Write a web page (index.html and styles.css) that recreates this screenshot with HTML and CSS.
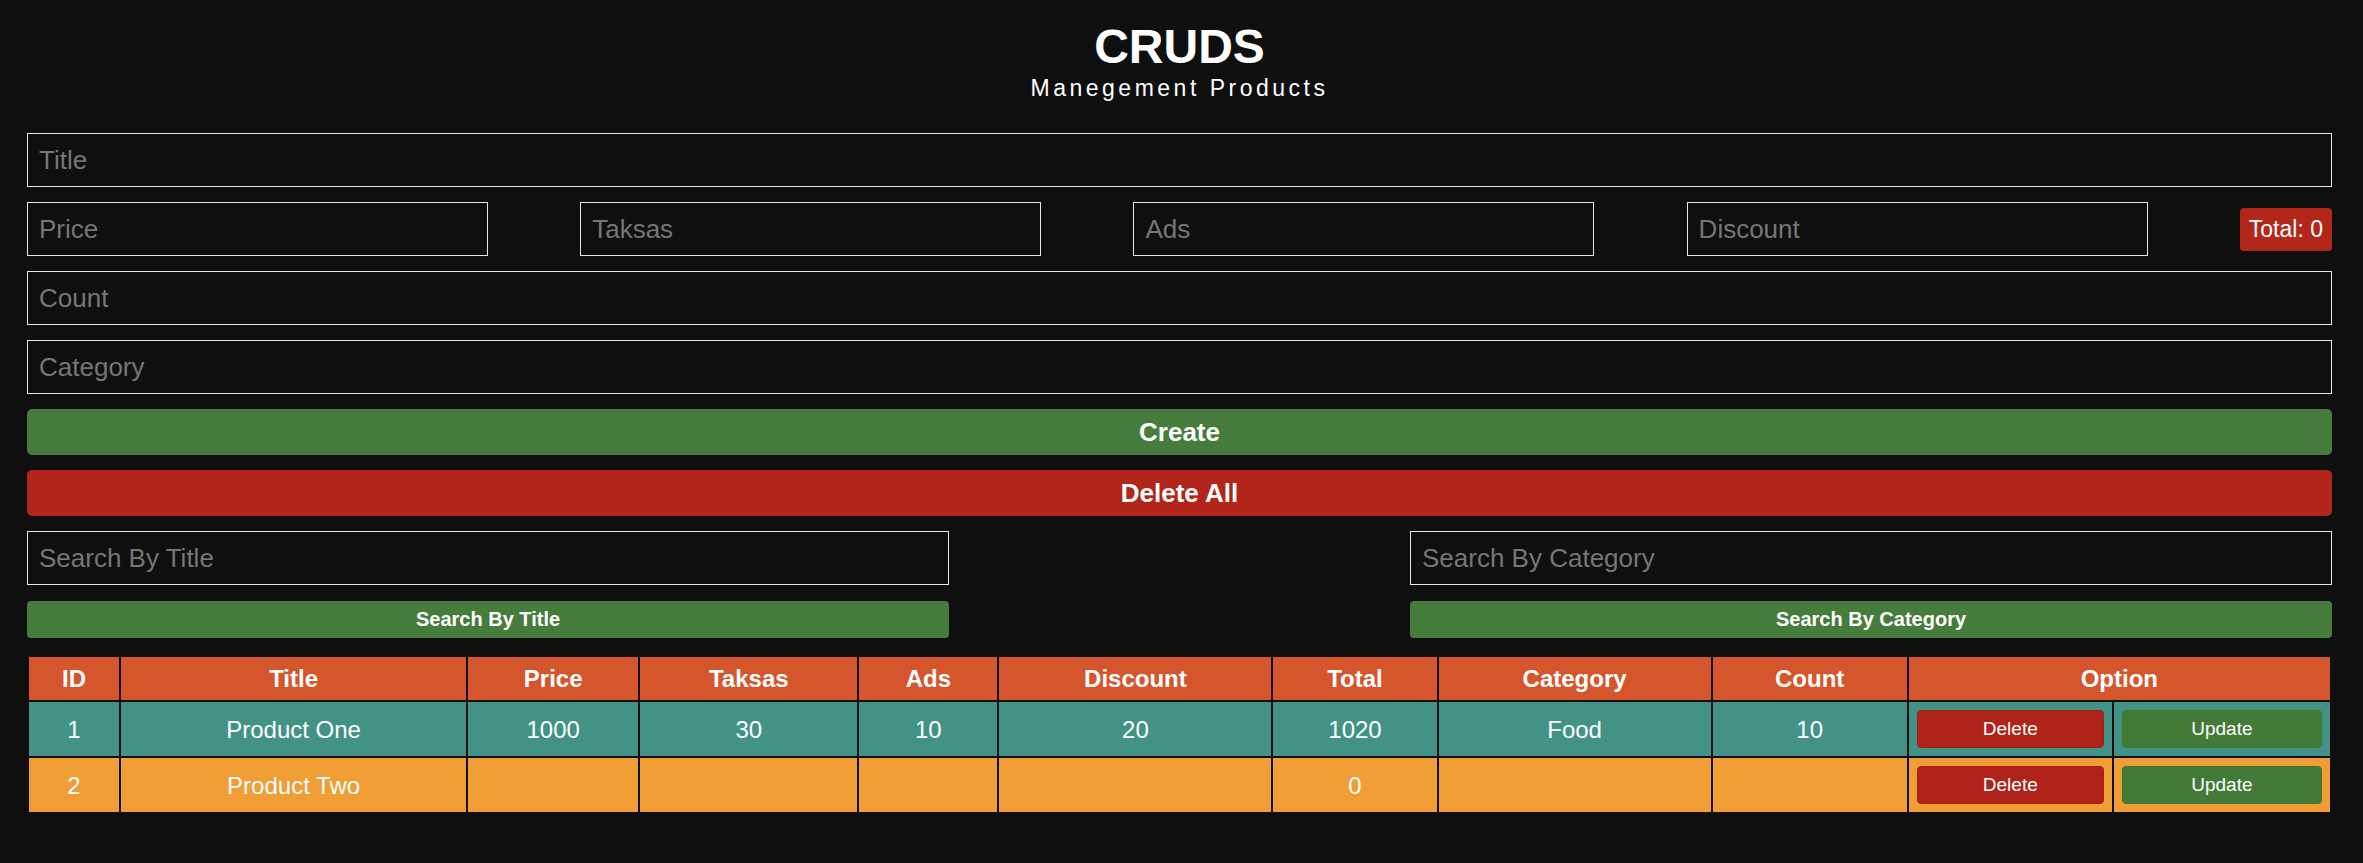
FILE: index.html
```html
<!DOCTYPE html>
<html lang="en">
<head>
<meta charset="UTF-8">
<title>CRUDS</title>
<link rel="stylesheet" href="styles.css">
</head>
<body>
<div class="page">
  <header class="head">
    <h1 class="head-title">CRUDS</h1>
    <p class="head-sub">Manegement Products</p>
  </header>

  <div class="form">
    <input class="field" type="text" placeholder="Title">
    <div class="price-row">
      <input class="field field-small" type="text" placeholder="Price">
      <input class="field field-small" type="text" placeholder="Taksas">
      <input class="field field-small" type="text" placeholder="Ads">
      <input class="field field-small" type="text" placeholder="Discount">
      <span class="total">Total: 0</span>
    </div>
    <input class="field" type="text" placeholder="Count">
    <input class="field" type="text" placeholder="Category">
    <button class="big-btn green">Create</button>
    <button class="big-btn red">Delete All</button>

    <div class="search-row">
      <div class="search-col">
        <input class="field" type="text" placeholder="Search By Title">
        <button class="search-btn">Search By Title</button>
      </div>
      <div class="search-col">
        <input class="field" type="text" placeholder="Search By Category">
        <button class="search-btn">Search By Category</button>
      </div>
    </div>
  </div>

  <table class="tbl">
    <colgroup>
      <col class="c-id"><col class="c-title"><col class="c-price"><col class="c-taksas"><col class="c-ads"><col class="c-discount"><col class="c-total"><col class="c-category"><col class="c-count"><col class="c-del"><col class="c-upd">
    </colgroup>
    <thead>
      <tr>
        <th>ID</th><th>Title</th><th>Price</th><th>Taksas</th><th>Ads</th><th>Discount</th><th>Total</th><th>Category</th><th>Count</th><th colspan="2">Option</th>
      </tr>
    </thead>
    <tbody>
      <tr class="row-teal">
        <td>1</td><td>Product One</td><td>1000</td><td>30</td><td>10</td><td>20</td><td>1020</td><td>Food</td><td>10</td>
        <td><button class="row-btn del">Delete</button></td>
        <td><button class="row-btn upd">Update</button></td>
      </tr>
      <tr class="row-orange">
        <td>2</td><td>Product Two</td><td></td><td></td><td></td><td></td><td>0</td><td></td><td></td>
        <td><button class="row-btn del">Delete</button></td>
        <td><button class="row-btn upd">Update</button></td>
      </tr>
    </tbody>
  </table>
</div>
</body>
</html>
```

FILE: styles.css
```css
* { box-sizing: border-box; }

html, body {
  margin: 0;
  background: #0f0f0f;
  color: #fff;
  font-family: "Liberation Sans", Arial, sans-serif;
}

.page {
  padding: 19px 31px 0 27px;
}

.head {
  text-align: center;
}

.head-title {
  margin: 0;
  font-size: 48px;
  line-height: 56px;
  font-weight: bold;
}

.head-sub {
  margin: 0;
  font-size: 23px;
  line-height: 26px;
  letter-spacing: 3.5px;
}

.form {
  margin-top: 32px;
  display: flex;
  flex-direction: column;
  gap: 15px;
}

.field {
  display: block;
  width: 100%;
  height: 54px;
  padding: 0 11px;
  background: transparent;
  border: 1px solid #e6e6e6;
  border-radius: 0;
  color: #fff;
  font-family: "Liberation Sans", Arial, sans-serif;
  font-size: 26px;
  outline: none;
}

.field::placeholder {
  color: #767676;
}

.price-row {
  display: flex;
  justify-content: space-between;
  align-items: center;
}

.field-small {
  width: 20%;
}

.total {
  background: #b3261a;
  color: #fff;
  font-size: 23px;
  line-height: 27px;
  padding: 8px 9px;
  border-radius: 4px;
}

.big-btn {
  display: block;
  width: 100%;
  height: 46px;
  border: none;
  border-radius: 5px;
  color: #fff;
  font-family: "Liberation Sans", Arial, sans-serif;
  font-size: 26px;
  font-weight: bold;
}

.green { background: #467c3c; }
.red { background: #b2251a; }

.search-row {
  display: flex;
  justify-content: space-between;
}

.search-col {
  width: 40%;
  display: flex;
  flex-direction: column;
  gap: 16px;
}

.search-btn {
  display: block;
  width: 100%;
  height: 37px;
  border: none;
  border-radius: 4px;
  background: #467c3c;
  color: #fff;
  font-family: "Liberation Sans", Arial, sans-serif;
  font-size: 20px;
  font-weight: bold;
}

.tbl {
  margin-top: 17px;
  width: 100%;
  table-layout: fixed;
  border-collapse: separate;
  border-spacing: 2px;
}

.c-id { width: 90px; }
.c-title { width: 345px; }
.c-price { width: 170px; }
.c-taksas { width: 217px; }
.c-ads { width: 138px; }
.c-discount { width: 272px; }
.c-total { width: 163px; }
.c-category { width: 272px; }
.c-count { width: 194px; }
.c-del { width: 203px; }
.c-upd { width: 216px; }

.tbl th {
  background: #d5552d;
  color: #fff;
  font-size: 24px;
  font-weight: bold;
  line-height: 27px;
  padding: 8px;
  text-align: center;
}

.tbl td {
  color: #fff;
  font-size: 24px;
  line-height: 27px;
  padding: 8px;
  text-align: center;
  height: 54px;
}

.row-teal td { background: #429386; }
.row-orange td { background: #f09d35; }

.row-btn {
  display: block;
  width: 100%;
  height: 38px;
  border-radius: 4px;
  color: #fff;
  font-family: "Liberation Sans", Arial, sans-serif;
  font-size: 19px;
}

.del {
  background: #b0231a;
  border: 1px solid #a51f17;
}

.upd {
  background: #447a38;
  border: 1px solid #3b7a2c;
}
```
